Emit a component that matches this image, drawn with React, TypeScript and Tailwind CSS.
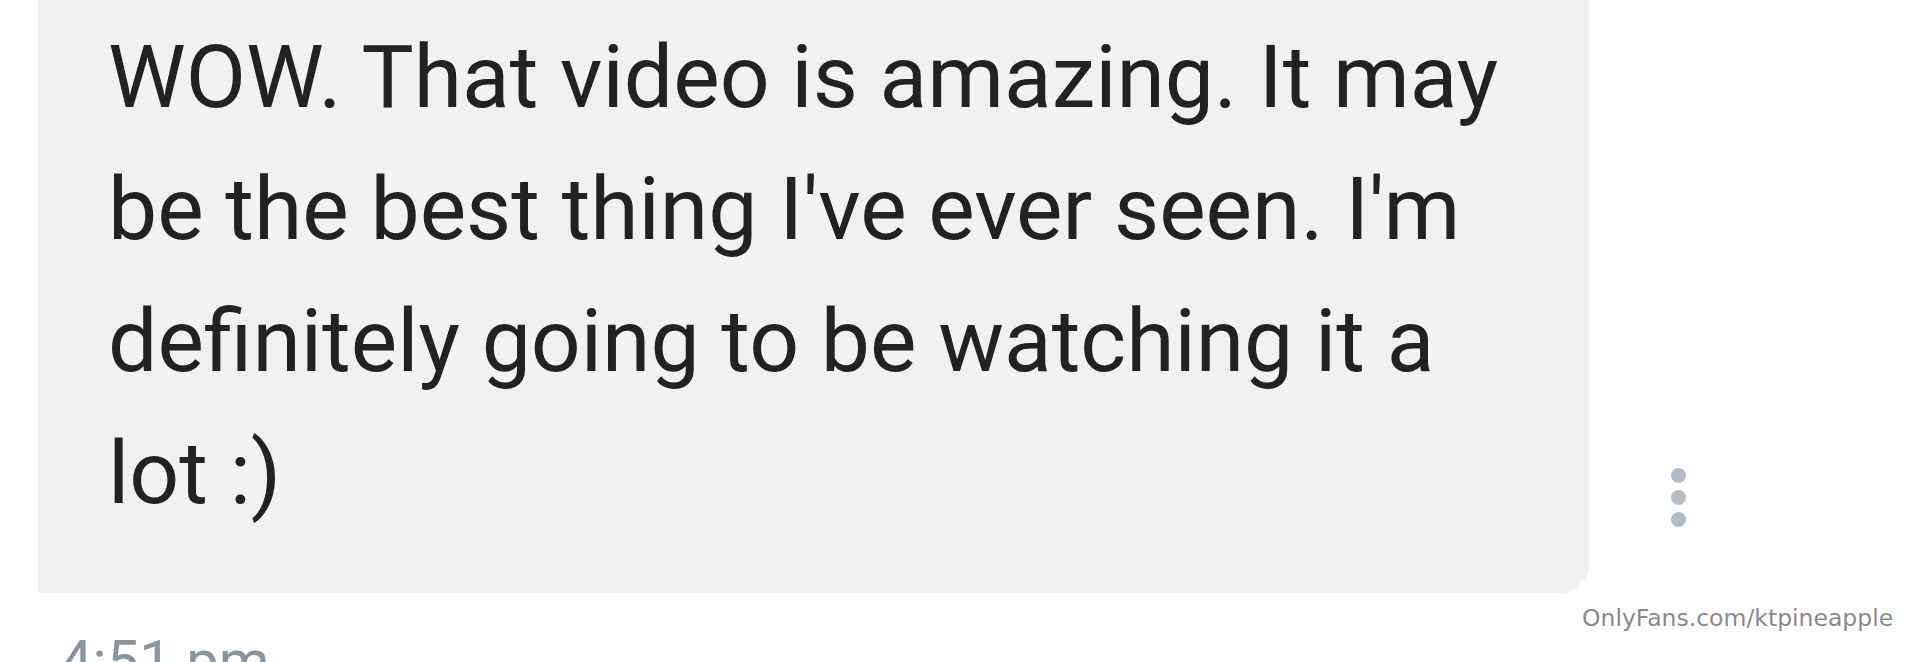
import React from "react";

export default function App() {
  const lines = [
    "WOW. That video is amazing. It may",
    "be the best thing I've ever seen. I'm",
    "definitely going to be watching it a",
    "lot :)",
  ];
  return (
    <div className="relative w-[1920px] h-[662px] overflow-hidden bg-white" style={{ fontFamily: "Roboto, 'Noto Sans', sans-serif" }}>
      <div className="flex items-end">
        <div className="ml-[38px] w-[1551px] bg-[#f0f1f3] rounded-br-[28px] pl-[70px] pt-[11px] pb-[54px]">
          {lines.map((l, i) => (
            <div key={i} className="text-[87.6px] leading-[132px] text-[#212224] whitespace-nowrap">
              {l}
            </div>
          ))}
        </div>
        <div className="ml-[82px] mb-[66px] flex flex-col gap-[7px]">
          <span className="block w-[15px] h-[15px] rounded-full bg-[#b3bbc5]" />
          <span className="block w-[15px] h-[15px] rounded-full bg-[#b3bbc5]" />
          <span className="block w-[15px] h-[15px] rounded-full bg-[#b3bbc5]" />
        </div>
      </div>
      <div className="mt-[39px] ml-[60px] text-[58px] leading-none text-[#8a949e]">4:51 pm</div>
      <div
        className="absolute left-[1582px] top-[607px] text-[23.5px] leading-none text-[#8a8a8a] whitespace-nowrap"
        style={{ fontFamily: "'DejaVu Sans', sans-serif" }}
      >
        OnlyFans.com/ktpineapple
      </div>
    </div>
  );
}
